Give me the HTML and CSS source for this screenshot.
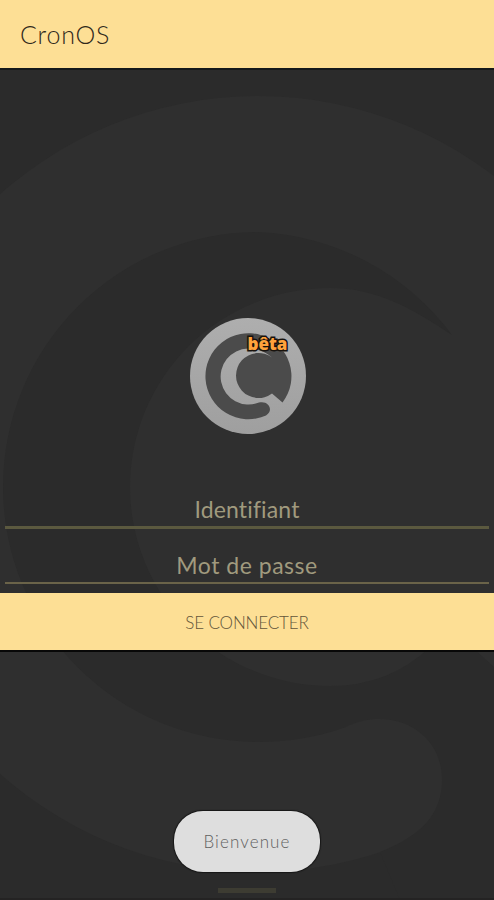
FILE: index.html
```html
<!DOCTYPE html>
<html lang="fr">
<head>
<meta charset="utf-8">
<title>CronOS</title>
<link rel="stylesheet" href="styles.css">
</head>
<body>
<div class="app">
  <svg class="backdrop" viewBox="0 0 494 900" aria-hidden="true">
    <circle cx="258" cy="484" r="388" fill="#2f2f2f"/>
    <path d="M452 335A255 255 0 0 0 258 232A255 255 0 0 0 3 487A255 255 0 0 0 258 742Q304 742 346 727C388 706 442 728 442 780C442 815 420 836 380 852L400 900H494V667L460 636L431 646Q390 686 330 686A200 199 0 0 1 130 487A200 199 0 0 1 330 288C377 288 413 309 452 335Z" fill="#2b2b2b"/>
  </svg>
  <header class="header"><h1 class="title">CronOS</h1></header>
  <main class="login">
    <div class="logo">
      <svg viewBox="0 0 116 116" aria-hidden="true">
        <defs><linearGradient id="metal" x1="0" y1="0" x2="0" y2="1"><stop offset="0" stop-color="#aeaeae"/><stop offset="1" stop-color="#9f9f9f"/></linearGradient></defs>
        <circle cx="58" cy="58" r="58" fill="url(#metal)"/>
        <path d="M92.500 84.500A43 43 0 1 0 76 97.500C84 93 79 82 69 84.500A28 28 0 1 1 58 30.500C67 30.500 76 34 82 39.500A22.500 22.500 0 1 0 82 75.500Z" fill="#4b4b4b"/>
      </svg>
      <span class="beta">bêta</span>
    </div>
    <div class="field user"><span>Identifiant</span></div>
    <div class="field pass"><span>Mot de passe</span></div>
    <button class="submit"><span>SE CONNECTER</span></button>
  </main>
  <footer class="footer">
    <div class="toast"><span>Bienvenue</span></div>
    <div class="handle"></div>
  </footer>
</div>
</body>
</html>
```
FILE: styles.css
```css
* { box-sizing: border-box; }
body { margin: 0; background: #2b2b2b; font-family: "Century Gothic", Lato, sans-serif; }
.app { position: relative; width: 494px; height: 900px; overflow: hidden; display: flex; flex-direction: column; border-bottom: 2px solid #242323; }
.backdrop { position: absolute; top: 0; left: 0; width: 494px; height: 900px; }
.header, .login, .footer { position: relative; }
.header { height: 70px; padding: 19px 20px 0; background: #fddf95; border-bottom: 2px solid #14191b; }
.title { margin: 0; font-size: 25px; line-height: 30px; font-weight: 300; color: #30291b; letter-spacing: .8px; }
.login { height: 582px; padding-top: 248px; display: flex; flex-direction: column; align-items: center; }
.logo { position: relative; width: 116px; height: 116px; margin-left: 1px; }
.logo svg { display: block; width: 116px; height: 116px; }
.beta { position: absolute; left: 58px; top: 14px; font: 800 17px/24px "Open Sans", sans-serif; color: #ffa23c; -webkit-text-stroke: 3px #17120d; paint-order: stroke fill; }
.field { width: 484px; text-align: center; color: #a09a7e; font-size: 23px; line-height: 30px; }
.user { height: 45px; margin-top: 50px; padding-top: 10px; letter-spacing: .15px; border-bottom: 3px solid #5b593f; }
.pass { height: 55px; padding-top: 21px; letter-spacing: .5px; border-bottom: 2px solid #6a6349; }
.submit { width: 100%; height: 59px; margin-top: auto; padding: 2px 0 0; border: 0; border-bottom: 2px solid #080808; background: #fddf95; color: #62553a; font: 300 17px/24px "Century Gothic", Lato, sans-serif; letter-spacing: -.15px; }
.footer { flex: 1; padding-top: 159px; display: flex; flex-direction: column; align-items: center; }
.toast { width: 146px; height: 61px; border-radius: 29px; background: #dedede; box-shadow: 0 0 1px 1px #171717; display: flex; align-items: center; justify-content: center; color: #606060; font-size: 17px; font-weight: 300; letter-spacing: 1.1px; }
.handle { width: 58px; height: 5px; margin-top: 16px; background: #3d3c32; }
```
